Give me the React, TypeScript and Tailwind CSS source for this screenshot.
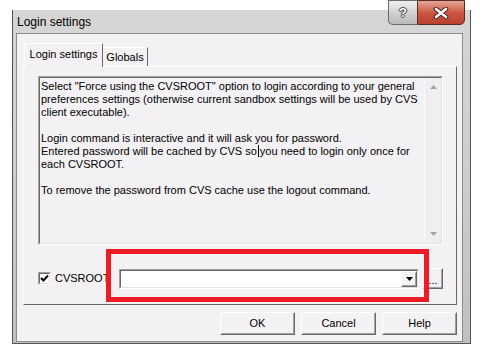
import type { ReactNode } from 'react'

const lines = [
  'Select "Force using the CVSROOT" option to login according to your general',
  'preferences settings (otherwise current sandbox settings will be used by CVS',
  'client executable).',
  '',
  'Login command is interactive and it will ask you for password.',
  'CARET',
  'each CVSROOT.',
  '',
  'To remove the password from CVS cache use the logout command.',
]

function Raised({ className, children }: { className?: string; children?: ReactNode }) {
  return (
    <div
      className={`flex border border-t-white border-l-white border-b-[#696969] border-r-[#696969] bg-[#f4f1f4] ${className ?? ''}`}
    >
      <div className="flex flex-1 items-center justify-center border border-t-[#f4f1f4] border-l-[#f4f1f4] border-b-[#a0a0a0] border-r-[#a0a0a0]">
        {children}
      </div>
    </div>
  )
}

function Sunken({ className, inner, children }: { className?: string; inner?: string; children?: ReactNode }) {
  return (
    <div className={`flex border border-t-[#a0a0a0] border-l-[#a0a0a0] border-b-white border-r-white ${className ?? ''}`}>
      <div className={`flex flex-1 border border-t-[#696969] border-l-[#696969] border-b-[#e3e3e3] border-r-[#e3e3e3] ${inner ?? ''}`}>
        {children}
      </div>
    </div>
  )
}

function CaptionButtons() {
  return (
    <div className="absolute left-[375px] top-[-10px] flex h-[25px]">
      <div className="flex w-[29px] items-center justify-center rounded-bl-[5px] border border-r-0 border-[#6a6a6a] bg-linear-to-b from-[#f0f0f0] via-[#d2d2d2] to-[#b9b9b9] pt-[1px] text-[13px] font-bold text-white [text-shadow:0_0_1px_#333,0_0_1px_#333,1px_0_0_#555,-1px_0_0_#555,0_1px_0_#555,0_-1px_0_#555]">
        ?
      </div>
      <div className="flex w-[48px] items-center justify-center rounded-br-[5px] border border-[#5a2c26] bg-linear-to-b from-[#e5a597] via-[#cd5744] to-[#b8412e]">
        <svg width="16" height="12" viewBox="0 0 16 12">
          <path d="M3 2 L13 10 M13 2 L3 10" stroke="#4b2420" strokeWidth="4.6" strokeLinecap="round" fill="none" />
          <path d="M3 2 L13 10 M13 2 L3 10" stroke="#ffffff" strokeWidth="2.6" strokeLinecap="round" fill="none" />
        </svg>
      </div>
    </div>
  )
}

export default function App() {
  return (
    <div className="relative h-[355px] w-[489px] overflow-hidden bg-white pl-[12px] pt-[10px] font-['Liberation_Sans',Arial,sans-serif] text-black">
      <div className="relative flex h-[334px] w-[459px] flex-col border-x border-b border-[#555] bg-linear-to-b from-[#d6d6d6] via-[#cdcdcd] to-[#c0c0c0] pb-px pl-[3px] pr-[7px]">
        <div className="flex h-[23px] items-center pl-px text-[12px]">Login settings</div>
        <CaptionButtons />

        <div className="flex h-[309px] flex-col border border-[#8c8c8c] bg-[#f4f1f4] pl-[6px] pr-[5px] pt-[9px] text-[11px]">
          <div className="flex h-[23px] items-end">
            <div className="relative z-10 -mb-px ml-px flex h-[24px] w-[79px] items-center justify-center border-l border-r border-t border-l-white border-t-white border-r-[#696969] bg-[#f4f1f4] pb-[2px]">
              Login settings
            </div>
            <div className="flex h-[19px] w-[45px] items-center justify-center border-r border-t border-t-white border-r-[#696969]">
              Globals
            </div>
          </div>

          <div className="flex h-[239px] w-[434px] flex-col border border-t-white border-l-white border-b-[#696969] border-r-[#696969] pl-[14px] pt-[9px]">
            <Sunken className="h-[169px] w-[405px]" inner="bg-[#f4f1f4]">
              <div className="flex-1 pl-px pt-[2px] leading-[13px]">
                {lines.map((line, i) =>
                  line === 'CARET' ? (
                    <div key={i} className="h-[13px] whitespace-nowrap">
                      Entered password will be cached by CVS so
                      <span className="mx-px inline-block h-[12px] w-px bg-black align-[-2px]" />
                      you need to login only once for
                    </div>
                  ) : (
                    <div key={i} className="h-[13px] whitespace-nowrap">
                      {line}
                    </div>
                  )
                )}
              </div>
              <div className="flex w-[17px] flex-col items-center justify-between border-l border-[#fbfafb] bg-[#f0eef0] py-[7px]">
                <svg width="7" height="4" viewBox="0 0 7 4">
                  <path d="M0 4 L3.5 0 L7 4 Z" fill="#a3a3a3" />
                </svg>
                <svg width="7" height="4" viewBox="0 0 7 4">
                  <path d="M0 0 L3.5 4 L7 0 Z" fill="#a3a3a3" />
                </svg>
              </div>
            </Sunken>

            <div className="mt-[23px] flex h-[21px] items-center">
              <div className="flex w-[81px] items-center">
                <Sunken className="h-[13px] w-[13px]" inner="bg-white items-center justify-center">
                  <svg width="9" height="9" viewBox="0 0 9 9">
                    <path d="M1 4 L3.5 6.5 L8 1.5" stroke="#000" strokeWidth="2" fill="none" />
                  </svg>
                </Sunken>
                <span className="ml-[4px]">CVSROOT</span>
              </div>
              <Sunken className="h-[20px] w-[300px]" inner="bg-white justify-end">
                <Raised className="w-[16px]">
                  <svg width="7" height="4" viewBox="0 0 7 4">
                    <path d="M0 0 L3.5 4 L7 0 Z" fill="#000" />
                  </svg>
                </Raised>
              </Sunken>
              <Raised className="ml-[4px] h-[21px] w-[20px]">
                <span className="pt-[3px] leading-none">...</span>
              </Raised>
            </div>
          </div>

          <div className="mt-[7px] flex justify-end gap-[6px]">
            <Raised className="h-[23px] w-[75px]">OK</Raised>
            <Raised className="h-[23px] w-[75px]">Cancel</Raised>
            <Raised className="h-[23px] w-[75px]">Help</Raised>
          </div>
        </div>
      </div>

      <div className="absolute left-[106px] top-[249px] h-[53px] w-[323px] border-[5px] border-[#ed1c24]" />
    </div>
  )
}
